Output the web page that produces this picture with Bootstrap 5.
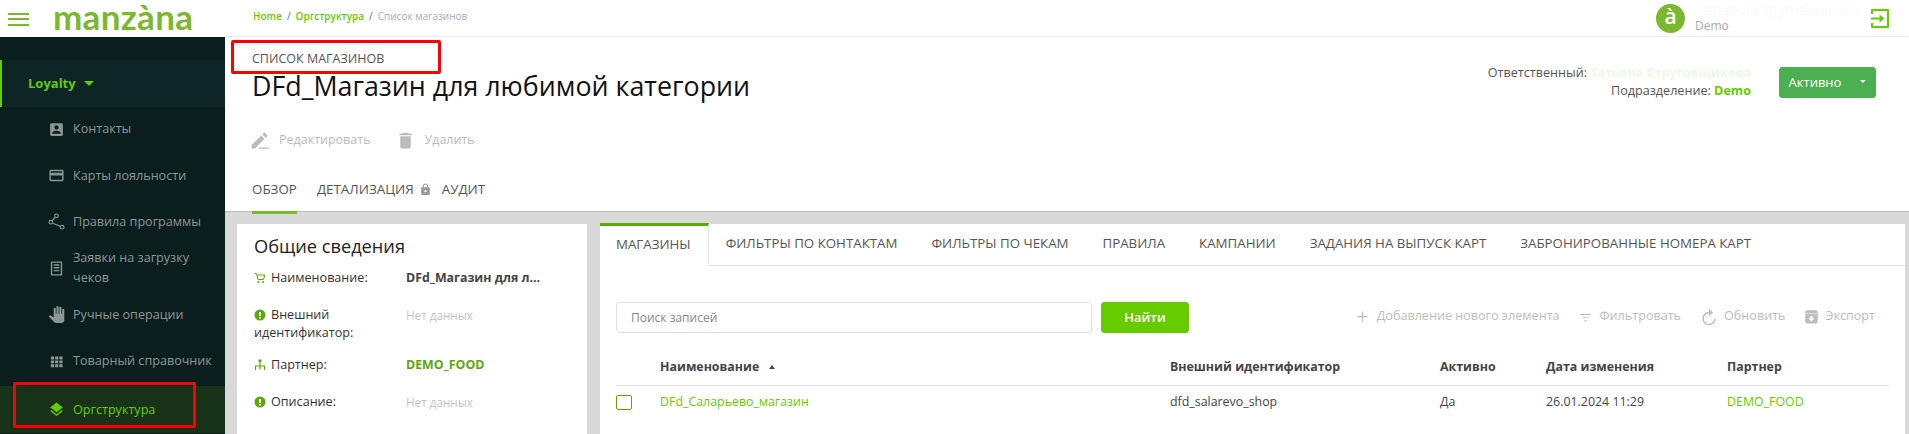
<!DOCTYPE html>
<html lang="ru">
<head>
  <meta charset="utf-8">
  <title>Список магазинов</title>
  <link href="https://cdn.jsdelivr.net/npm/bootstrap@5.3.0/dist/css/bootstrap.min.css" rel="stylesheet">
  <style>
    html, body { height: 434px; overflow: hidden; }
    body { font-family: "Open Sans", "Liberation Sans", sans-serif; font-size: 12.6px; color: #444; background: #d9d9d9; position: relative; }
    a { text-decoration: none; }
    svg { fill: currentColor; flex: none; }

    /* sidebar */
    .side-col { width: 225px; flex: none; height: 434px; background: #0a1e1e; }
    .logo-bar { height: 37px; background: #fff; padding-left: 8px; overflow: hidden; }
    .burger { width: 21px; height: 13px; border-top: 2px solid #7cb82f; border-bottom: 2px solid #7cb82f; position: relative; margin-top: 1px; }
    .burger::after { content: ""; position: absolute; left: 0; right: 0; top: 3.5px; height: 2px; background: #7cb82f; }
    .logo-text { font-family: Lato, sans-serif; font-weight: 700; font-size: 35px; line-height: 30px; color: #7cb82f; margin-left: 24px; letter-spacing: .3px; margin-top: -6px; }
    .side-menu { padding-top: 23px; }
    .side-head { height: 47px; background: #0e2526; border-left: 2px solid #66cc00; padding-left: 26px; color: #66cc00; font-weight: 700; font-size: 13px; }
    .side-head .caret-down { margin-left: 8px; border-top: 5px solid #66cc00; border-left: 5px solid transparent; border-right: 5px solid transparent; }
    .side-item { height: 46.4px; padding-left: 48px; color: #8b9696; line-height: 20px; margin-top: 0; }
    .side-item svg { width: 17px; height: 17px; margin-right: 8px; }
    .side-item.is-active { background: #18331a; color: #66cc00; height: 47px; margin-top: 2px; }
    .side-first { margin-top: -1px; }

    /* top of the page */
    .page-col { min-width: 0; }
    .top-bar { height: 37px; background: #fff; border-bottom: 1px solid #eee; padding-left: 28px; padding-right: 20px; }
    .crumbs { font-size: 10px; --bs-breadcrumb-margin-bottom: 0; --bs-breadcrumb-item-padding-x: 5px; margin-top: -4px; }
    .crumbs a { color: #66cc00; font-weight: 600; }
    .crumbs .active { color: #aaa; }
    .ava { width: 29px; height: 29px; border-radius: 50%; background: #7cb82f; color: #fff; font-size: 21px; font-weight: 600; line-height: 25px; text-align: center; }
    .user-box { font-size: 12px; line-height: 16px; margin-left: 10px; width: 176px; color: #aaa; }
    .user-name { color: #fafafa; font-size: 14px; }
    .head-box { height: 175px; background: #fff; border-bottom: 1px solid #bbb; padding: 13px 33px 0 27px; position: relative; }
    .over-title { color: #555; font-size: 12.5px; line-height: 18px; }
    .big-title { font-size: 26.8px; font-weight: 400; color: #111; line-height: 38px; margin: -1px 0 0; }
    .who-box { text-align: right; line-height: 18px; padding-top: 14px; margin-right: 28px; color: #555; }
    .who-box b { color: #66cc00; }
    .who-box .faint { color: #eef8e6; }
    .state-group { margin-top: 17px; }
    .btn-state { --bs-btn-bg: #4caf50; --bs-btn-border-color: #4caf50; --bs-btn-hover-bg: #4caf50; --bs-btn-hover-border-color: #4caf50; --bs-btn-color: #fff; --bs-btn-hover-color: #fff; --bs-btn-font-size: 13px; --bs-btn-border-radius: 3px; height: 31px; width: 72px; padding: 0; }
    .btn-state.dropdown-toggle-split { width: 26px; padding: 0; }
    .head-tools { margin-top: 25px; color: #bbb; font-size: 12.5px; }
    .head-tools svg { width: 21px; height: 21px; margin-right: 9px; }
    .head-tools svg.edit-ico { margin-left: -3px; }
    .head-tabs { margin-top: 28px; gap: 20px; font-size: 13.4px; text-transform: uppercase; color: #555; }
    .head-tabs > span { padding-bottom: 12px; border-bottom: 3px solid transparent; }
    .head-tabs > .is-on { border-bottom-color: #7cb82f; }
    .head-tabs > .pull-left { margin-left: -10px; }
    .head-tabs svg { width: 13px; height: 13px; color: #999; margin: 0 0 2px 5px; }

    /* panels */
    .panels { padding: 12px 4px 0 12px; gap: 13px; }
    .info-panel { width: 350px; flex: none; height: 210px; background: #fff; padding: 10px 17px; }
    .info-title { font-size: 18.2px; line-height: 24px; color: #222; margin: 0 0 11px; }
    .info-row { margin-bottom: 19px; line-height: 18px; color: #333; }
    .info-row.row-two { margin-bottom: 14px; }
    .info-label { width: 152px; flex: none; }
    .info-label svg { width: 12px; height: 12px; color: #5aa80a; margin: 0 5px 2px 0; }
    .info-val { font-weight: 700; color: #444; font-size: 12.4px; }
    .info-empty { color: #c4c4c4; font-size: 11.7px; }
    .info-link { font-weight: 700; color: #5aa80a; font-size: 12.4px; }
    .tabs-panel { width: 1305px; flex: none; height: 210px; background: #fff; }
    .shop-tabs { --bs-nav-tabs-border-color: #dee2e6; --bs-nav-tabs-border-radius: 0; --bs-nav-link-padding-x: 17px; --bs-nav-link-padding-y: 0; --bs-nav-link-color: #555; --bs-nav-link-hover-color: #555; --bs-nav-tabs-link-active-color: #555; text-transform: uppercase; font-size: 13.3px; }
    .shop-tabs .nav-link { height: 41px; line-height: 39px; border-width: 0; }
    .shop-tabs .nav-link.active { border-top: 3px solid #5aa80a; border-right: 1px solid #dee2e6; border-bottom: 1px solid #fff; line-height: 37px; padding-left: 16px; padding-right: 17px; height: 43px; margin-top: -1px; }
    .search-row { padding: 36px 16px 0; }
    .search-input { width: 476px; height: 31px; font-size: 12px; border-radius: 3px; padding: 0 14px; }
    .search-input::placeholder { color: #888; }
    .btn-find { --bs-btn-bg: #66cc00; --bs-btn-border-color: #66cc00; --bs-btn-hover-bg: #66cc00; --bs-btn-hover-border-color: #66cc00; --bs-btn-color: #fff; --bs-btn-hover-color: #fff; --bs-btn-font-weight: 600; --bs-btn-font-size: 13px; --bs-btn-border-radius: 3px; width: 88px; height: 31px; padding: 0; margin-left: 9px; }
    .tool-links { color: #bdbdbd; font-size: 12.6px; gap: 18px; margin-right: 14px; margin-top: -2px; }
    .tool-links svg { width: 15px; height: 15px; margin-right: 7px; }
    .tool-links svg.tall-ico { width: 18px; height: 20px; margin-right: 6px; margin-left: 1px; }
    .shop-table { width: 1273px; margin: 20px 0 0 16px; table-layout: fixed; font-size: 12.4px; }
    .shop-table th, .shop-table td { padding: 0; border-color: #dee2e6; color: #444; vertical-align: middle; background: transparent; }
    .shop-table thead th { height: 32px; padding-bottom: 3px; font-weight: 700; }
    .shop-table tbody td { height: 36px; border-bottom: 0; padding-bottom: 1px; }
    .shop-table a { color: #66cc00; }
    .up-mark { display: inline-block; margin-left: 6px; margin-bottom: 2px; border-bottom: 4px solid #444; border-left: 3px solid transparent; border-right: 3px solid transparent; }
    .row-check { width: 16px; height: 15px; display: block; border: 1px solid #5aa80a; border-radius: 2px; }

    /* red marks on the screenshot */
    .red-mark { position: absolute; border: 3px solid #f00; border-radius: 2px; }
    .mark-a { left: 231px; top: 40px; width: 210px; height: 34px; }
    .mark-b { left: 13px; top: 382px; width: 183px; height: 46px; }
  </style>
</head>
<body class="d-flex">
  <aside class="side-col">
    <div class="logo-bar d-flex align-items-center">
      <div class="burger"></div>
      <div class="logo-text">manzàna</div>
    </div>
    <div class="side-menu">
      <div class="side-head d-flex align-items-center">Loyalty <span class="caret-down"></span></div>
      <a class="side-item side-first d-flex align-items-center" href="#">
        <svg viewBox="0 0 24 24"><path d="M3 5v14c0 1.1.89 2 2 2h14c1.1 0 2-.9 2-2V5c0-1.1-.9-2-2-2H5c-1.11 0-2 .9-2 2zm12 4c0 1.66-1.34 3-3 3s-3-1.34-3-3 1.34-3 3-3 3 1.34 3 3zm-9 8c0-2 4-3.1 6-3.1s6 1.1 6 3.1v1H6v-1z"/></svg>Контакты</a>
      <a class="side-item d-flex align-items-center" href="#">
        <svg viewBox="0 0 24 24"><path d="M20 4H4c-1.11 0-1.99.89-1.99 2L2 18c0 1.11.89 2 2 2h16c1.11 0 2-.89 2-2V6c0-1.11-.89-2-2-2zm0 14H4v-6h16v6zm0-10H4V6h16v2z"/></svg>Карты лояльности</a>
      <a class="side-item d-flex align-items-center" href="#">
        <svg viewBox="0 0 24 24"><circle cx="12" cy="4" r="2.6" fill="none" stroke="currentColor" stroke-width="1.6"/><circle cx="4" cy="13" r="2.6" fill="none" stroke="currentColor" stroke-width="1.6"/><circle cx="20" cy="20" r="2.6" fill="none" stroke="currentColor" stroke-width="1.6"/><path d="M10.3 6 5.8 11M6.4 14.4l11.2 4.4" fill="none" stroke="currentColor" stroke-width="1.6"/></svg>Правила программы</a>
      <a class="side-item d-flex align-items-center" href="#">
        <svg viewBox="0 0 24 24"><path d="M5 2h14a1 1 0 0 1 1 1v18a1 1 0 0 1-1 1H5a1 1 0 0 1-1-1V3a1 1 0 0 1 1-1zm1 2v16h12V4H6zm2 2h8v2H8V6zm0 4h8v2H8v-2zm0 4h8v2H8v-2z"/></svg><span>Заявки на загрузку<br>чеков</span></a>
      <a class="side-item d-flex align-items-center" href="#">
        <svg viewBox="0 0 24 24"><path d="M23 5.5V20c0 2.2-1.8 4-4 4h-7.3c-1.08 0-2.1-.43-2.85-1.19L1 14.83s1.26-1.23 1.3-1.25c.22-.19.49-.29.79-.29.22 0 .42.06.6.16.04.01 4.31 2.46 4.31 2.46V4c0-.83.67-1.5 1.5-1.5S11 3.17 11 4v7h1V1.5c0-.83.67-1.5 1.5-1.5S15 .67 15 1.5V11h1V2.5c0-.83.67-1.5 1.5-1.5s1.5.67 1.5 1.5V11h1V5.5c0-.83.67-1.5 1.5-1.5s1.5.67 1.5 1.5z"/></svg>Ручные операции</a>
      <a class="side-item d-flex align-items-center" href="#">
        <svg viewBox="0 0 24 24"><path d="M4 5h4.5v4H4zm6 0h4.500v4H10zm6 0h4.500v4H16zM4 10.500h4.500v4H4zm6 0h4.500v4H10zm6 0h4.500v4H16zM4 16h4.500v4H4zm6 0h4.500v4H10zm6 0h4.500v4H16z"/></svg>Товарный справочник</a>
      <a class="side-item is-active d-flex align-items-center" href="#">
        <svg viewBox="0 0 24 24"><path d="M11.99 18.54l-7.37-5.73L3 14.070l9 7 9-7-1.630-1.270-7.380 5.740zM12 16l7.360-5.730L21 9l-9-7-9 7 1.630 1.270L12 16z"/></svg>Оргструктура</a>
    </div>
  </aside>

  <div class="page-col flex-grow-1">
    <div class="top-bar d-flex align-items-center">
      <nav class="flex-grow-1">
        <ol class="breadcrumb crumbs">
          <li class="breadcrumb-item"><a href="#">Home</a></li>
          <li class="breadcrumb-item"><a href="#">Оргструктура</a></li>
          <li class="breadcrumb-item active">Список магазинов</li>
        </ol>
      </nav>
      <div class="ava">à</div>
      <div class="user-box">
        <div class="user-name">Татьяна Струговщикова</div>
        <div>Demo</div>
      </div>
      <svg width="18" height="19" viewBox="0 0 18 19" class="exit-ico"><path fill="#66cc00" d="M1 0h16a1 1 0 0 1 1 1v17a1 1 0 0 1-1 1H1a1 1 0 0 1-1-1v-4h2v3h14V2H2v3H0V1a1 1 0 0 1 1-1z"/><path fill="#66cc00" d="M0 8.500h8.500V5.500l5 4-5 4v-3H0z"/></svg>
    </div>

    <div class="head-box">
      <div class="d-flex">
        <div class="flex-grow-1">
          <div class="over-title">СПИСОК МАГАЗИНОВ</div>
          <h1 class="big-title">DFd_Магазин для любимой категории</h1>
        </div>
        <div class="who-box">
          <div>Ответственный: <b class="faint">Татьяна Струговщикова</b></div>
          <div>Подразделение: <b>Demo</b></div>
        </div>
        <div class="btn-group align-self-start state-group">
          <button type="button" class="btn btn-state">Активно</button>
          <button type="button" class="btn btn-state dropdown-toggle dropdown-toggle-split"></button>
        </div>
      </div>
      <div class="head-tools d-flex align-items-center">
        <svg class="edit-ico" viewBox="0 0 24 24"><path d="M3 17.250V21h3.750L17.810 9.940l-3.750-3.750L3 17.250zM20.710 7.040c.39-.39.39-1.020 0-1.410l-2.340-2.340c-.39-.39-1.020-.39-1.410 0l-1.830 1.830 3.750 3.750 1.830-1.830zM11 20h12v1.500H11z"/></svg>
        <span class="me-4">Редактировать</span>
        <svg viewBox="0 0 24 24"><path d="M6 19c0 1.100.9 2 2 2h8c1.100 0 2-.9 2-2V7H6v12zM19 4h-3.500l-1-1h-5l-1 1H5v2h14V4z"/></svg>
        <span>Удалить</span>
      </div>
      <div class="head-tabs d-flex">
        <span class="is-on">Обзор</span>
        <span>Детализация<svg viewBox="0 0 24 24"><path d="M18 8h-1V6c0-2.760-2.240-5-5-5S7 3.240 7 6v2H6c-1.100 0-2 .9-2 2v10c0 1.100.9 2 2 2h12c1.100 0 2-.9 2-2V10c0-1.100-.9-2-2-2zm-6 9c-1.100 0-2-.9-2-2s.9-2 2-2 2 .9 2 2-.9 2-2 2zm3.100-9H8.900V6c0-1.710 1.390-3.100 3.100-3.100 1.710 0 3.100 1.390 3.100 3.100v2z"/></svg></span>
        <span class="pull-left">Аудит</span>
      </div>
    </div>

    <div class="panels d-flex">
      <div class="info-panel">
        <h2 class="info-title">Общие сведения</h2>
        <div class="info-row d-flex">
          <div class="info-label"><svg viewBox="0 0 24 24"><path d="M1 3h4l3 12h11l3-9H6.500" fill="none" stroke="currentColor" stroke-width="2"/><circle cx="9" cy="20" r="2"/><circle cx="18" cy="20" r="2"/></svg>Наименование:</div>
          <div class="info-val">DFd_Магазин для л...</div>
        </div>
        <div class="info-row row-two d-flex">
          <div class="info-label"><svg viewBox="0 0 24 24"><path fill-rule="evenodd" d="M12 1a11 11 0 1 0 0 22 11 11 0 0 0 0-22zm-2 5h4v8h-4zm0 10h4v3h-4z"/></svg>Внешний идентификатор:</div>
          <div class="info-empty">Нет данных</div>
        </div>
        <div class="info-row d-flex">
          <div class="info-label"><svg viewBox="0 0 24 24"><path d="M12 3v18M3 22v-8h18v8" fill="none" stroke="currentColor" stroke-width="2.4"/><path d="M9 1h6v5H9z"/></svg>Партнер:</div>
          <a class="info-link" href="#">DEMO_FOOD</a>
        </div>
        <div class="info-row d-flex">
          <div class="info-label"><svg viewBox="0 0 24 24"><path fill-rule="evenodd" d="M12 1a11 11 0 1 0 0 22 11 11 0 0 0 0-22zm-2 5h4v8h-4zm0 10h4v3h-4z"/></svg>Описание:</div>
          <div class="info-empty">Нет данных</div>
        </div>
      </div>

      <div class="tabs-panel">
        <ul class="nav nav-tabs shop-tabs">
          <li class="nav-item"><a class="nav-link active" href="#">Магазины</a></li>
          <li class="nav-item"><a class="nav-link" href="#">Фильтры по контактам</a></li>
          <li class="nav-item"><a class="nav-link" href="#">Фильтры по чекам</a></li>
          <li class="nav-item"><a class="nav-link" href="#">Правила</a></li>
          <li class="nav-item"><a class="nav-link" href="#">Кампании</a></li>
          <li class="nav-item"><a class="nav-link" href="#">Задания на выпуск карт</a></li>
          <li class="nav-item"><a class="nav-link" href="#">Забронированные номера карт</a></li>
        </ul>
        <div class="search-row d-flex align-items-center">
          <input type="text" class="form-control search-input" placeholder="Поиск записей">
          <button type="button" class="btn btn-find">Найти</button>
          <div class="tool-links d-flex align-items-center ms-auto">
            <span class="d-flex align-items-center"><svg viewBox="0 0 24 24"><path d="M11 4h2v7h7v2h-7v7h-2v-7H4v-2h7z"/></svg>Добавление нового элемента</span>
            <span class="d-flex align-items-center"><svg viewBox="0 0 24 24"><path d="M3 8h18v1.500H3zm4 5h10v1.500H7zm3 5h4v1.500h-4z"/></svg>Фильтровать</span>
            <span class="d-flex align-items-center"><svg class="tall-ico" viewBox="0 0 24 24"><path d="M12 6a8 8 0 1 0 8 8" fill="none" stroke="currentColor" stroke-width="2"/><path d="M12 1v10l5.500-5z"/></svg>Обновить</span>
            <span class="d-flex align-items-center"><svg viewBox="0 0 24 24"><path fill-rule="evenodd" d="M5 2h14a3 3 0 0 1 3 3v15a3 3 0 0 1-3 3H5a3 3 0 0 1-3-3V5a3 3 0 0 1 3-3zM2 7v1h20V7zm8 4v4H7l5 5 5-5h-3v-4z"/></svg>Экспорт</span>
          </div>
        </div>
        <table class="table shop-table">
          <colgroup>
            <col width="44"><col width="510"><col width="270"><col width="106"><col width="181"><col width="162">
          </colgroup>
          <thead>
            <tr><th></th><th>Наименование <span class="up-mark"></span></th><th>Внешний идентификатор</th><th>Активно</th><th>Дата изменения</th><th>Партнер</th></tr>
          </thead>
          <tbody>
            <tr>
              <td><span class="row-check"></span></td>
              <td><a href="#">DFd_Саларьево_магазин</a></td>
              <td>dfd_salarevo_shop</td>
              <td>Да</td>
              <td>26.01.2024 11:29</td>
              <td><a href="#">DEMO_FOOD</a></td>
            </tr>
          </tbody>
        </table>
      </div>
    </div>
  </div>

  <div class="red-mark mark-a"></div>
  <div class="red-mark mark-b"></div>

  <script src="https://cdn.jsdelivr.net/npm/bootstrap@5.3.0/dist/js/bootstrap.bundle.min.js"></script>
</body>
</html>
